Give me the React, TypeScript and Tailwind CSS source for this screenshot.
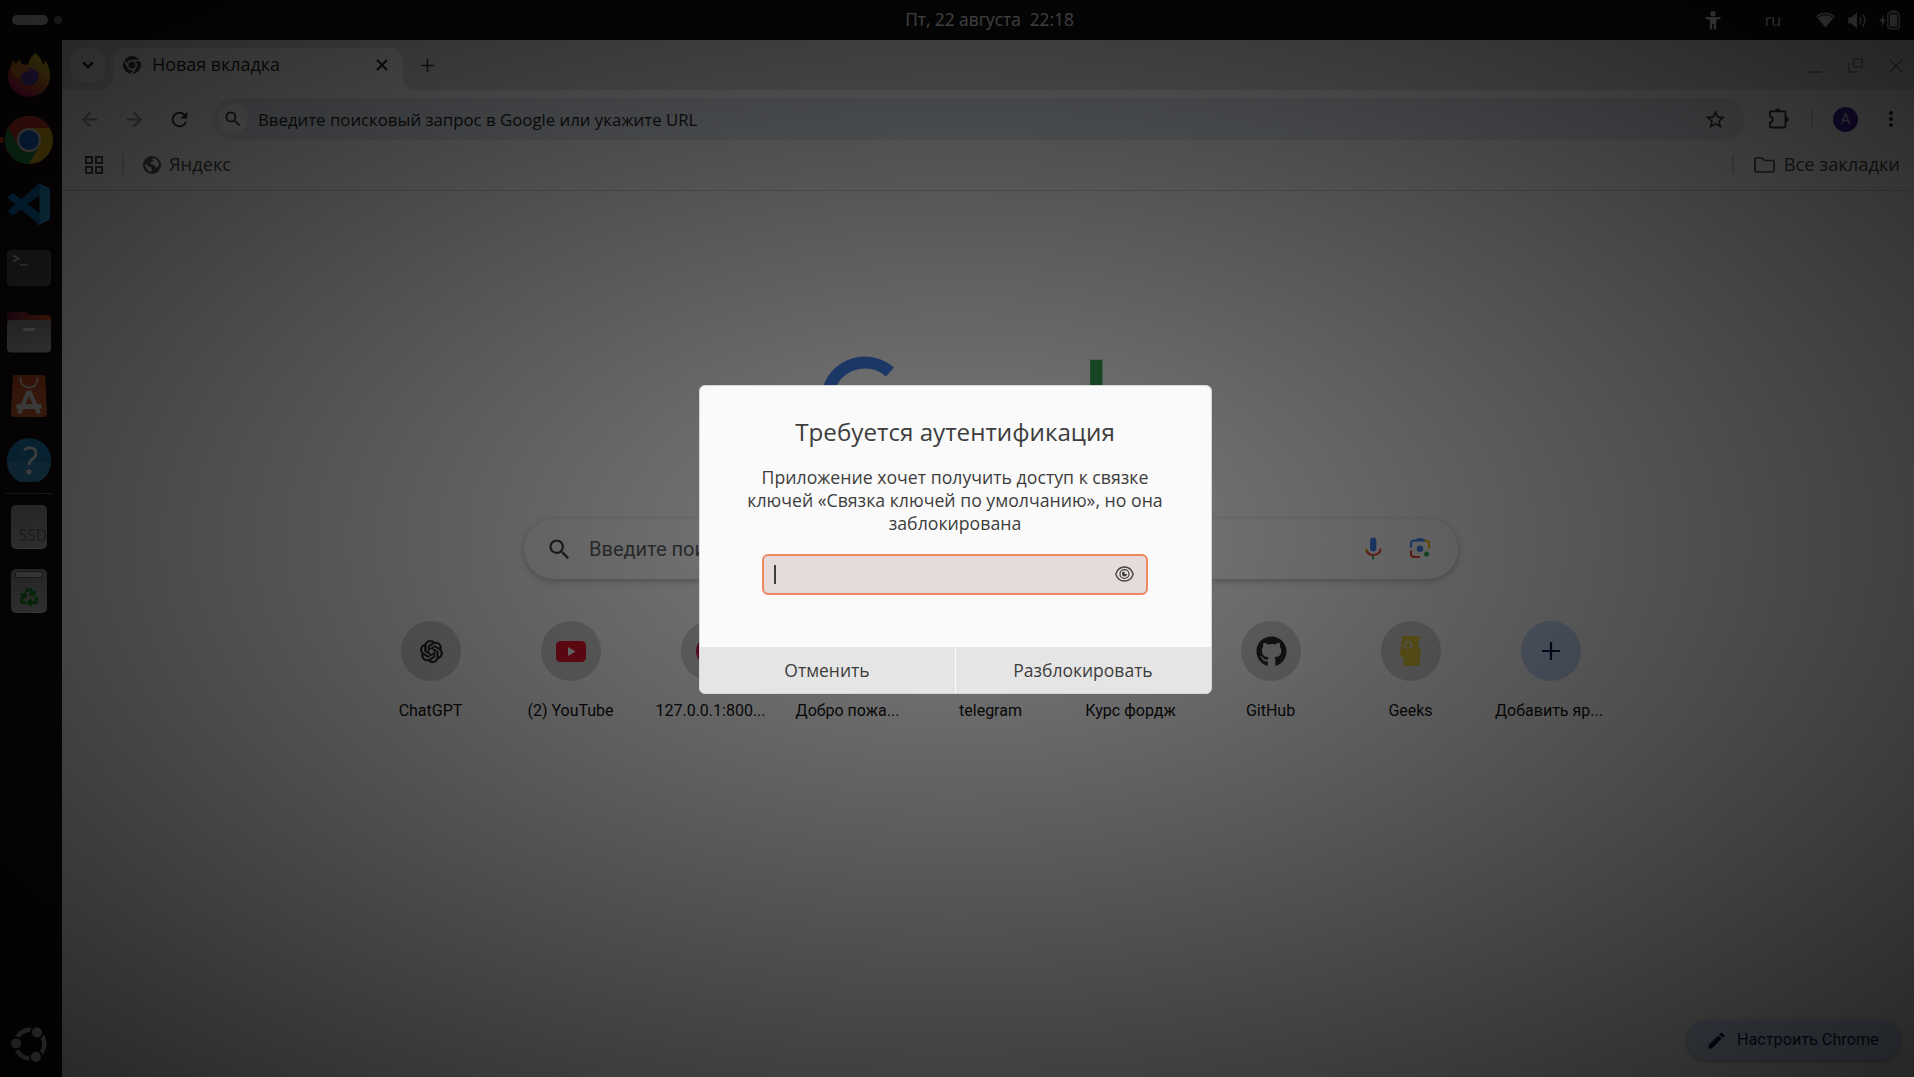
import React from "react";
import {
  MdArrowBack,
  MdArrowForward,
  MdEdit,
  MdMoreVert,
  MdRefresh,
  MdSearch,
  MdStarBorder,
} from "react-icons/md";
import { RiOpenaiFill } from "react-icons/ri";
import { FaGithub, FaRecycle } from "react-icons/fa";

function TopBar() {
  return (
    <header className="grid h-10 shrink-0 grid-cols-[1fr_auto_1fr] items-center bg-[#101010] text-[#f0f0f0]">
      <div className="flex items-center gap-1.5 pl-3">
        <span className="h-2.5 w-9 rounded-full bg-[#f0f0f0]" />
        <span className="size-2 rounded-full bg-[#8a8a8a]" />
      </div>
      <div className="whitespace-pre pl-[65px] text-[17.300px] leading-none">{"Пт, 22 августа  22:18"}</div>
      <div className="flex items-center justify-end pr-[14px]">
        <svg width="16" height="19" viewBox="0 0 16 19" fill="#f0f0f0">
          <circle cx="8" cy="2.700" r="2.600" />
          <path d="M.5 6h15v2l-4.300.8V18.500H8.800V13H7.200v5.500H4.800V8.800L.5 8z" />
        </svg>
        <span className="ml-[44px] text-[16px] leading-none">ru</span>
        <svg className="ml-[35px]" width="19" height="16" viewBox="0 0 19 16">
          <path d="M.3 4.300A14 14 0 0 1 18.700 4.300L9.500 15.700z" fill="#e8e8e8" />
          <path d="M2.300 5A12 12 0 0 1 16.700 5" stroke="#101010" strokeWidth="1.300" fill="none" />
        </svg>
        <svg className="ml-[13px]" width="19" height="17" viewBox="0 0 19 17">
          <path d="M.3 5.500h3L9 .5v16L3.300 11.500h-3z" fill="#e8e8e8" />
          <path d="M11.500 5a5 5 0 0 1 0 7M14.500 2.500a9 9 0 0 1 0 12" stroke="#d4d4d4" strokeWidth="1.600" fill="none" />
        </svg>
        <svg className="ml-[12px]" width="21" height="20" viewBox="0 0 21 20">
          <path d="M5 4.500L.5 11.500h2.700L2.500 17l4.300-7.500H4.300z" fill="#f0f0f0" />
          <rect x="8.800" y="2.300" width="11.400" height="16.500" rx="3" fill="none" stroke="#d0d0d0" strokeWidth="1.500" />
          <rect x="11.500" y=".3" width="6" height="2" fill="#d0d0d0" />
          <rect x="10.800" y="4.300" width="7.400" height="12.500" rx="1" fill="#e8e8e8" />
        </svg>
      </div>
    </header>
  );
}

function FirefoxIcon() {
  return (
    <svg className="-mt-[2px]" width="44" height="46" viewBox="0 0 44 46">
      <defs>
        <linearGradient id="ff-body" x1=".8" y1=".1" x2=".25" y2=".95">
          <stop offset="0" stopColor="#f5df3a" />
          <stop offset=".35" stopColor="#f0a024" />
          <stop offset=".65" stopColor="#e8502f" />
          <stop offset="1" stopColor="#d0107a" />
        </linearGradient>
        <linearGradient id="ff-globe" x1=".3" y1="0" x2=".5" y2="1">
          <stop offset="0" stopColor="#9a4bc0" />
          <stop offset="1" stopColor="#4a3cb8" />
        </linearGradient>
      </defs>
      <path
        d="M28.500 1C33 5 35.500 9 36 13C37.800 12 38 10 37.500 8C41 12 43.200 18 43 24C43 36 33.500 44.700 22 44.700S1 36 1 24C1 19 2.500 15 5 12C5 11 5 10 5.700 8C6.500 10 7.500 10.800 8.500 11L13.500 7.500C13.300 9.500 14 11.500 15.500 12.500L21 13C22 8 24.500 3.500 28.500 1Z"
        fill="url(#ff-body)"
      />
      <circle cx="22.500" cy="24" r="9.300" fill="url(#ff-globe)" />
      <path d="M4 13.500C8 11 13 13 15.500 14.500C19 14 22 16 23 18C21.500 20.500 17 19 15.500 21C14 23 13 24 12.500 27C8 26 4 19 4 13.500Z" fill="#ee8a2c" />
      <path d="M21 13.500C26 11 33 16 33.500 23C31.500 19.500 28.500 17 24 16.500Z" fill="#eeae30" />
    </svg>
  );
}

function ChromeIcon() {
  return (
    <svg width="48" height="48" viewBox="0 0 48 48">
      <circle cx="24" cy="24" r="24" fill="#f2c21a" />
      <path d="M3.200 12A24 24 0 0 1 44.800 12H24A12 12 0 0 0 13.600 30Z" fill="#dc3b2e" />
      <path d="M3.200 12A24 24 0 0 0 24 48L34.400 30A12 12 0 0 1 13.600 30Z" fill="#23984b" />
      <circle cx="24" cy="24" r="12" fill="#f0f0f0" />
      <circle cx="24" cy="24" r="9.800" fill="#1a6ee0" />
    </svg>
  );
}

function VscodeIcon() {
  return (
    <svg width="42" height="42" viewBox="0 0 42 42">
      <path d="M.4 27.500L31 .4L32 11.500L5.500 32.300Q4.500 32.600 3.500 32L.5 29.300Q0 28.500 .4 27.500Z" fill="#0a6fb5" />
      <path d="M.4 14L3.500 10.500Q4.500 9.800 5.500 10.500L32 30.500L31 41.600L.4 15.500Z" fill="#0a7cc4" />
      <path d="M31 .3L41 5Q42 5.600 42 7V35Q42 36.300 41 37L31 41.700Q29.800 42 29 41L31.500 40V2Z" fill="#2a9fe0" />
    </svg>
  );
}

function TerminalIcon() {
  return (
    <svg width="44" height="36" viewBox="0 0 44 36">
      <rect x=".5" y=".5" width="43" height="35" rx="4" fill="#505050" stroke="#626262" />
      <path d="M6 5.500L12 8.500L6 11.500" fill="none" stroke="#d8d8d8" strokeWidth="1.500" />
      <path d="M13 15H20.500" stroke="#d8d8d8" strokeWidth="1.500" />
    </svg>
  );
}

function FilesIcon() {
  return (
    <svg width="44" height="41" viewBox="0 0 44 41">
      <defs>
        <linearGradient id="folder-back">
          <stop offset="0" stopColor="#701c44" />
          <stop offset="1" stopColor="#d8501f" />
        </linearGradient>
        <linearGradient id="folder-front" x2="0" y2="1">
          <stop offset="0" stopColor="#929292" />
          <stop offset="1" stopColor="#b6b6b6" />
        </linearGradient>
      </defs>
      <path d="M0 15V4Q0 0 4 0H17Q20 0 21.500 3H40Q44 3 44 7V15Z" fill="url(#folder-back)" />
      <rect y="8" width="44" height="32.500" rx="4" fill="url(#folder-front)" />
      <rect x="16" y="16" width="12" height="3" rx="1" fill="#f4f4f4" />
    </svg>
  );
}

function SoftwareIcon() {
  return (
    <svg width="36" height="42" viewBox="0 0 36 42">
      <path d="M2 3Q2 0 5 0H31Q34 0 34.200 3L36 38Q36 42 32 42H4Q0 42 0 38Z" fill="#cf5a30" />
      <path d="M2 3Q2 0 5 0H31Q34 0 34.200 3L34.700 13H1.400Z" fill="#c94a1c" />
      <path d="M9.500 2.500V5A8.500 7.500 0 0 0 26.500 5V2.500" fill="none" stroke="#e4e4e4" strokeWidth="1.600" />
      <path d="M8 38.500L17 18H19L28 38.500" fill="none" stroke="#e0e0e0" strokeWidth="4.300" />
      <path d="M7.500 31.500H28.500" stroke="#e4e4e4" strokeWidth="5" strokeLinecap="round" />
    </svg>
  );
}

function HelpIcon() {
  return (
    <svg width="44" height="44" viewBox="0 0 44 44">
      <circle cx="22" cy="22" r="22" fill="#2080b8" />
      <path d="M0 24H44A22 22 0 0 1 0 24Z" fill="#358cc0" />
      <path d="M17 12Q20 9.800 23 9.800Q29 9.800 29 15.500Q29 18.500 25.500 21Q22 23.500 22 27" fill="none" stroke="#ececec" strokeWidth="2.800" />
      <circle cx="22" cy="33.800" r="2.500" fill="#ececec" />
    </svg>
  );
}

function UbuntuIcon() {
  return (
    <svg width="36" height="36" viewBox="0 0 36 36">
      <circle cx="19" cy="18" r="14.300" fill="none" stroke="#c4c4c4" strokeWidth="4.400" />
      {[
        [5.200, 17.500],
        [26, 6.300],
        [24.800, 30.800],
      ].map(([x, y]) => (
        <circle key={x} cx={x} cy={y} r="6.100" fill="#c4c4c4" stroke="#0f0a0d" strokeWidth="2" />
      ))}
    </svg>
  );
}

function DockSlot({ children }: { children: React.ReactNode }) {
  return <div className="flex h-16 w-[58px] shrink-0 items-center justify-center">{children}</div>;
}

function Dock() {
  return (
    <nav className="flex w-[62px] shrink-0 flex-col bg-[#130a0e] pt-[4px]">
      <DockSlot><FirefoxIcon /></DockSlot>
      <div className="relative">
        <span className="absolute -left-0.5 top-[29px] h-1.5 w-1.5 rounded-full bg-[#e95420]" />
        <DockSlot><ChromeIcon /></DockSlot>
      </div>
      <DockSlot><VscodeIcon /></DockSlot>
      <DockSlot><TerminalIcon /></DockSlot>
      <DockSlot><FilesIcon /></DockSlot>
      <DockSlot><SoftwareIcon /></DockSlot>
      <DockSlot><HelpIcon /></DockSlot>
      <div className="ml-[5px] mt-[1px] h-px w-12 bg-[#5a5356]" />
      <DockSlot>
        <div className="mt-[1px] flex h-11 w-9 items-end justify-end rounded-[5px] border-b border-[#c8c8c8] bg-gradient-to-b from-[#909090] to-[#b0b0b0] pb-[4px] text-[15.500px] leading-none text-[#666]">
          SSD
        </div>
      </DockSlot>
      <DockSlot>
        <div className="mt-[1px] flex h-11 w-9 flex-col items-center rounded-[5px] border-b border-[#c8c8c8] bg-gradient-to-b from-[#8e8e8e] to-[#b4b4b4]">
          <span className="mt-[2px] h-[7px] w-7 rounded-t-[3px] border border-[#555] bg-[#c8c8c8]" />
          <FaRecycle className="mt-[10px] stroke-current stroke-[30] text-[18px] text-[#148a20]" />
        </div>
      </DockSlot>
      <div className="mb-[1px] mt-auto"><DockSlot><UbuntuIcon /></DockSlot></div>
    </nav>
  );
}

function ChromeMono() {
  return (
    <svg width="18" height="18" viewBox="0 0 18 18">
      <circle cx="9" cy="9" r="9" fill="#3c4043" />
      <path d="M9 4.600H17M5.200 11.200L1.500 4.500M12.800 11.200L8.700 18" stroke="#fff" strokeWidth="1.500" />
      <circle cx="9" cy="9" r="4.400" fill="#3c4043" stroke="#fff" strokeWidth="1.600" />
    </svg>
  );
}

function TabStrip() {
  return (
    <div className="flex h-[50px] items-end bg-[#dde3e9]">
      <div className="mb-[8px] ml-2 flex h-[34px] w-[35px] items-center justify-center rounded-xl bg-white/85">
        <svg width="12" height="8" viewBox="0 0 12 8" fill="none" stroke="#1f1f1f" strokeWidth="2.400">
          <path d="M1.300 1.300L6 6L10.700 1.300" />
        </svg>
      </div>
      <svg className="-ml-1 shrink-0" width="12" height="15" viewBox="0 0 12 15" fill="#fff">
        <path d="M12 0Q12 15 0 15H12Z" />
      </svg>
      <div className="flex h-[42px] w-[290px] items-center rounded-t-[13px] bg-white pb-[8px] pl-[10px] pr-[15px]">
        <ChromeMono />
        <span className="-mt-[1px] ml-[11px] text-[17.900px] leading-none text-[#1f1f1f]">Новая вкладка</span>
        <svg className="ml-auto" width="12" height="12" viewBox="0 0 12 12" stroke="#1f1f1f" strokeWidth="1.900">
          <path d="M1 1L11 11M11 1L1 11" />
        </svg>
      </div>
      <svg className="shrink-0" width="15" height="15" viewBox="0 0 15 15" fill="#fff">
        <path d="M0 0Q0 15 15 15H0Z" />
      </svg>
      <svg className="mb-[18.500px] ml-[3px]" width="13" height="13" viewBox="0 0 13 13" stroke="#3c4043" strokeWidth="1.700">
        <path d="M6.500 0V13M0 6.500H13" />
      </svg>
      <div className="mb-[17px] ml-auto mr-[11px] flex items-end gap-[26px] text-[#858a90]">
        <svg width="14" height="14" viewBox="0 0 14 14" stroke="currentColor" strokeWidth="1.500">
          <path d="M0 13H14" />
        </svg>
        <svg width="15" height="15" viewBox="0 0 15 15" fill="none" stroke="currentColor" strokeWidth="1.500">
          <path d="M5.500 1H14V9H5.500ZM1 5V14H9.500" />
        </svg>
        <svg width="14" height="14" viewBox="0 0 14 14" stroke="currentColor" strokeWidth="1.500">
          <path d="M1 1L13 13M13 1L1 13" />
        </svg>
      </div>
    </div>
  );
}

function Toolbar() {
  return (
    <div className="flex h-[50px] items-center bg-white pt-2">
      <div className="flex w-[150px] items-center gap-[22px] pl-[16px]">
        <MdArrowBack className="size-[23px] text-[#9a9c9f]" />
        <MdArrowForward className="size-[23px] text-[#9a9c9f]" />
        <MdRefresh className="size-[23px] text-[#303235]" />
      </div>
      <div className="flex h-[42px] w-[1533px] items-center rounded-full bg-[#e4ebf4] pl-[6px] pr-[18px]">
        <span className="flex size-[30px] items-center justify-center rounded-full bg-white">
          <MdSearch className="size-[20px] text-[#303235]" />
        </span>
        <span className="ml-[10px] mt-[2px] text-[16.800px] leading-none text-[#1f1f1f]">
          Введите поисковый запрос в Google или укажите URL
        </span>
        <MdStarBorder className="ml-auto size-[23px] text-[#303235]" />
      </div>
      <svg className="ml-[23px] -mt-[1px]" width="21" height="21" viewBox="0 0 21 21">
        <path
          d="M3 3.300H16.500Q17.500 3.300 17.500 4.300V18.500Q17.500 19.500 16.500 19.500H3Q2 19.500 2 18.500V14.500Q4.800 13.800 4.800 11.500T2 8.300V4.300Q2 3.300 3 3.300Z"
          fill="none"
          stroke="#303235"
          strokeWidth="1.800"
        />
        <path d="M7 3A2.600 2.600 0 0 1 12.200 3ZM18 8.700A2.600 2.600 0 0 1 18 13.900Z" fill="#303235" />
      </svg>
      <span className="ml-[22px] h-5 w-[2px] bg-[#ccdcf0]" />
      <span className="ml-[20px] flex size-[25px] items-center justify-center rounded-full bg-[#3f1c9c] font-['Roboto'] text-[14px] text-white/80">
        A
      </span>
      <MdMoreVert className="ml-[21px] size-[24px] text-[#202124]" />
    </div>
  );
}

function BookmarksBar() {
  return (
    <div className="flex h-[51px] items-center border-b border-[#d5d5d5] bg-white pr-[14px] text-[18.300px] leading-none text-[#474747]">
      <svg className="ml-[23px]" width="18" height="18" viewBox="0 0 18 18" fill="none" stroke="#4a4c4f" strokeWidth="2">
        <path d="M1 1H7V7H1ZM11 1H17V7H11ZM1 11H7V17H1ZM11 11H17V17H11Z" />
      </svg>
      <span className="ml-[19px] h-5 w-[2px] bg-[#ccdcf0]" />
      <svg className="ml-[19px]" width="18" height="18" viewBox="0 0 18 18">
        <circle cx="9" cy="9" r="9" fill="#55595e" />
        <path d="M9.500 2Q9 4 10.500 5L7 6.500Q8 9 10.500 8.800Q12.500 9 12 11.500Q15.500 11 16 8.500Q15.500 3.500 10.500 2ZM2 8Q5.500 9 5.500 11L8.500 11.300V16Q2.500 14.500 2 8Z" fill="#fff" />
      </svg>
      <span className="-mt-[2px] ml-[8px]">Яндекс</span>
      <span className="ml-auto h-[19px] w-[2px] rounded bg-[#ccd6ee]" />
      <svg className="ml-[20px] mr-[9px]" width="21" height="16" viewBox="0 0 21 16" fill="none" stroke="#4a4c4f" strokeWidth="1.700">
        <path d="M1 2.500Q1 1 2.500 1H8L10.500 3.500H18.500Q20 3.500 20 5V13.500Q20 15 18.500 15H2.500Q1 15 1 13.500Z" />
      </svg>
      <span className="-mt-[2px]">Все закладки</span>
    </div>
  );
}

function GoogleLogo() {
  return (
    <svg className="mt-[165px] shrink-0" width="340" height="110" viewBox="0 0 340 110" fill="none" strokeWidth="12">
      <path d="M69 16A38.200 38.200 0 1 0 82 47H45" stroke="#4285f4" />
      <circle cx="112" cy="63" r="21" stroke="#ea4335" />
      <circle cx="166" cy="63" r="21" stroke="#fbbc05" />
      <circle cx="221" cy="63" r="21" stroke="#4285f4" />
      <path d="M275.300 3.700V88" stroke="#34a853" strokeWidth="12.300" />
      <circle cx="309" cy="63" r="21" stroke="#ea4335" />
    </svg>
  );
}

function SearchBox() {
  return (
    <div className="mt-[53px] flex h-[60px] w-[934px] shrink-0 items-center rounded-full bg-white pl-[22px] pr-[27px] shadow-[0_2px_7px_rgba(32,33,36,0.3)]">
      <MdSearch className="size-[27px] text-[#3c4043]" />
      <span className="ml-[16px] font-['Roboto'] text-[20px] leading-none text-[#5f6368]">
        Введите поисковый запрос или URL
      </span>
      <svg className="-mt-[2px] ml-auto" width="17" height="23" viewBox="0 0 17 23" fill="none">
        <rect x="5" y=".5" width="6.400" height="14" rx="3.200" fill="#4285f4" />
        <path d="M1 11.500Q1 13.700 2.500 15.700" stroke="#fbbc05" strokeWidth="2" />
        <path d="M1.800 14Q3.700 18 8.200 18Q15.500 17.500 15.500 11.500" stroke="#ea4335" strokeWidth="2" />
        <path d="M8.200 18.500V22.500" stroke="#34a853" strokeWidth="2" />
      </svg>
      <svg className="-mt-[2px] ml-[27px]" width="22" height="22" viewBox="0 0 22 22" fill="none" strokeWidth="2.100">
        <path d="M2 10.500V6.500Q2 3.500 5.500 3.500H17" stroke="#4285f4" />
        <path d="M6.500 4L8 1.200H14L15.500 4Z" fill="#4285f4" />
        <path d="M15.500 3.500Q20 3.500 20 7V11.500" stroke="#fbbc05" />
        <path d="M2 13.500V17Q2 20 5.500 20H11" stroke="#ea4335" />
        <circle cx="11" cy="11.700" r="3.300" fill="#4285f4" />
        <circle cx="17.600" cy="17" r="2.500" fill="#34a853" />
      </svg>
    </div>
  );
}

function GeeksIcon() {
  return (
    <svg width="24" height="30" viewBox="0 0 24 30">
      <path d="M3 0H20L19.500 12H22L20 30H4L5 22.500L2.500 22V20L.5 19L2 11Z" fill="#dcc538" />
      <path d="M20.500 1H23V3H20.500Z" fill="#dcc538" opacity=".5" />
      <circle cx="9" cy="9" r="3.300" fill="none" stroke="#dcdac8" strokeWidth="1.600" />
      <path d="M11.500 7.500L14.500 9L11.500 11Z" fill="#dcdac8" />
    </svg>
  );
}

const shortcuts: { label: string; icon: React.ReactNode; add?: boolean; shift?: string }[] = [
  { label: "ChatGPT", icon: <RiOpenaiFill className="size-[27px] stroke-current stroke-[0.6] text-[#202124]" /> },
  {
    label: "(2) YouTube",
    icon: (
      <svg width="30" height="21" viewBox="0 0 30 21">
        <rect width="30" height="21" rx="4.500" fill="#e8122e" />
        <path d="M12 6L19.500 10.500L12 15Z" fill="#fff" />
      </svg>
    ),
  },
  { label: "127.0.0.1:800...", icon: <span className="size-[30px] rounded-full bg-[#c8104f]" /> },
  { label: "Добро пожа...", shift: "pr-[7px]", icon: <span className="size-[30px] rounded-full bg-[#4285f4]" /> },
  { label: "telegram", icon: <span className="size-[30px] rounded-full bg-[#2aabee]" /> },
  { label: "Курс фордж", icon: <span className="size-[30px] rounded-full bg-[#5f6368]" /> },
  { label: "GitHub", icon: <FaGithub className="size-[31px] text-[#24292f]" /> },
  { label: "Geeks", icon: <GeeksIcon /> },
  {
    label: "Добавить яр...",
    add: true,
    shift: "pr-[4px]",
    icon: (
      <svg width="18" height="18" viewBox="0 0 18 18" stroke="#041e49" strokeWidth="2.200">
        <path d="M9 0V18M0 9H18" />
      </svg>
    ),
  },
];

function Shortcuts() {
  return (
    <div className="mt-[42px] flex font-['Roboto']">
      {shortcuts.map((s) => (
        <div key={s.label} className="flex w-[140px] flex-col items-center">
          <div
            className={
              s.add
                ? "flex size-[60px] items-center justify-center rounded-full bg-[#c8dbfa]"
                : "flex size-[60px] items-center justify-center rounded-full bg-[#d6d6d6]"
            }
          >
            {s.icon}
          </div>
          <span className={`mt-[20px] whitespace-nowrap text-[16px] leading-5 text-[#101010] ${s.shift ?? "pr-[1px]"}`}>
            {s.label}
          </span>
        </div>
      ))}
    </div>
  );
}

function Browser() {
  return (
    <main className="flex min-w-0 flex-1 flex-col bg-white">
      <TabStrip />
      <Toolbar />
      <BookmarksBar />
      <div className="flex flex-1 flex-col items-center pl-[6px]">
        <GoogleLogo />
        <SearchBox />
        <Shortcuts />
        <button className="mb-[17px] mr-[14px] mt-auto flex h-10 w-[213px] items-center self-end rounded-full bg-[#d3e3fd] pl-[19px] font-['Roboto'] text-[16.200px] text-[#041e49] shadow-[0_1px_4px_rgba(0,0,0,0.35)]">
          <MdEdit className="mr-[10px] size-[21px] shrink-0" />
          <span className="whitespace-nowrap pt-px">Настроить Chrome</span>
        </button>
      </div>
    </main>
  );
}

function AuthDialog() {
  return (
    <div className="flex h-[309px] w-[513px] flex-col overflow-hidden rounded-[6px] border border-[#d6d6d6] bg-[#fafafa] text-center text-[#3d3d3d]">
      <h1 className="mt-[30px] text-[24.200px] leading-[32px]">Требуется аутентификация</h1>
      <p className="mt-[18px] whitespace-nowrap text-[17.700px] leading-[23px]">
        Приложение хочет получить доступ к связке
        <br />
        ключей «Связка ключей по умолчанию», но она
        <br />
        заблокирована
      </p>
      <div className="mx-auto mt-[19px] flex h-[41px] w-[386px] items-center justify-between rounded-[6px] border-2 border-[#f08763] bg-[#e4dbda] pl-[7.500px] pr-[12px]">
        <span className="ml-[2px] h-[19px] w-[2px] bg-[#3d3d3d]" />
        <svg className="-mt-px" width="19" height="16" viewBox="0 0 18 16" preserveAspectRatio="none" fill="none" stroke="#4a4646">
          <path d="M.7 8Q3 1 9 1T17.300 8Q15 15 9 15T.7 8Z" strokeWidth="1.300" />
          <circle cx="9" cy="8" r="4.300" strokeWidth="1.200" />
          <path d="M9 8V5.600A2.400 2.400 0 1 0 11.400 8Z" fill="#3d3d3d" stroke="none" />
        </svg>
      </div>
      <div className="mt-auto grid h-[46px] grid-cols-2 gap-px text-[17.500px]">
        <button className="bg-[#e5e5e5]">Отменить</button>
        <button className="bg-[#e5e5e5]">Разблокировать</button>
      </div>
    </div>
  );
}

export default function App() {
  return (
    <div className="relative flex h-[1077px] w-[1914px] flex-col overflow-hidden bg-black font-['Open_Sans','Noto_Sans',sans-serif]">
      <TopBar />
      <div className="flex min-h-0 flex-1">
        <Dock />
        <Browser />
      </div>
      <div className="absolute inset-0 flex items-center justify-center bg-[radial-gradient(ellipse_farthest-corner_at_center,rgba(0,0,0,0.5),rgba(0,0,0,0.85))] pb-px pr-[4px] pt-[3px]">
        <AuthDialog />
      </div>
    </div>
  );
}
